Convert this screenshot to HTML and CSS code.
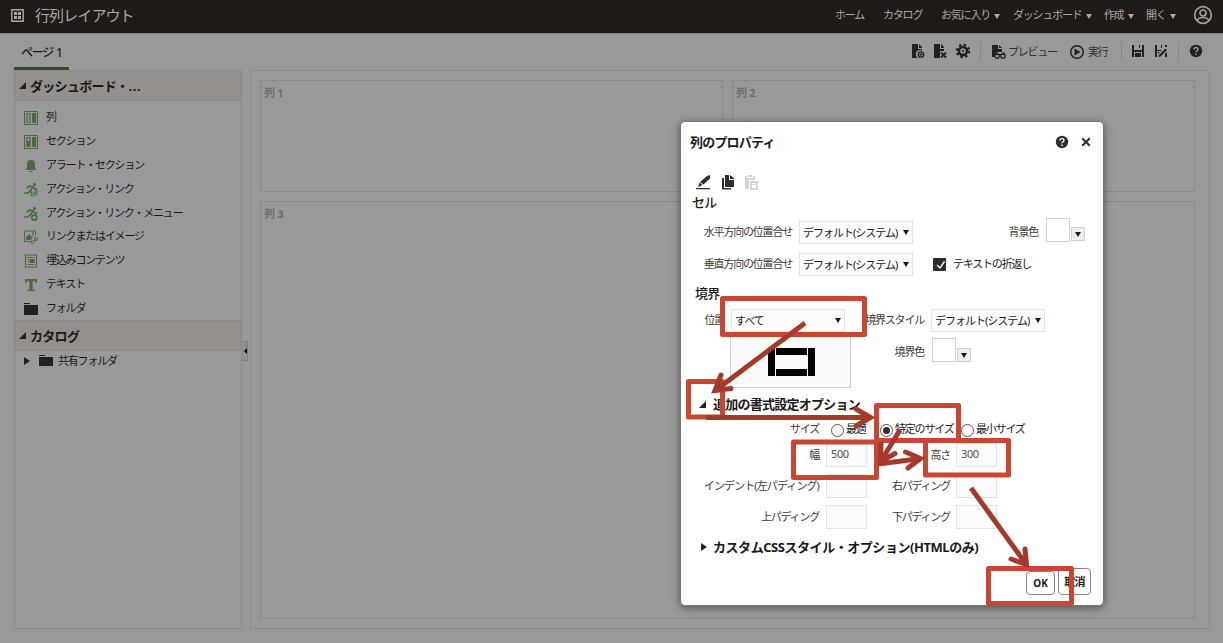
FILE: index.html
```
<!doctype html>
<html lang="ja">
<head>
    <meta charset="UTF-8"/>
    <title>行列レイアウト</title>
    <link rel="stylesheet" href="styles.css">
</head>
<body>
<div class="header">
    <svg class="logo" width="13" height="13" viewBox="0 0 13 13"><path d="M.8.8h11.4v11.4H.8z" fill="none" stroke="#aaa8a6" stroke-width="1.4"/><path d="M3 3h3v3H3zM7 3h3v3H7zM3 7h3v3H3zM7 7h3v3H7z" fill="#aaa8a6"/></svg>
    <h1>行列レイアウト</h1>
    <div class="nav">
        <span class="n1">ホーム</span>
        <span class="n2">カタログ</span>
        <span class="n3">お気に入り<i class="down"></i></span>
        <span class="n4">ダッシュボード<i class="down"></i></span>
        <span class="n5">作成<i class="down"></i></span>
        <span class="n6">開く<i class="down"></i></span>
        <svg width="20" height="20" viewBox="0 0 20 20" fill="none" stroke="#a19f9d" stroke-width="1.7"><circle cx="10" cy="10" r="8.3"/><circle cx="10" cy="8" r="3"/><path d="M4.500 15.500c1-4 10-4 11 0"/></svg>
    </div>
</div>
<div class="bar">
    <div class="tab">ページ 1</div>
    <div class="tools">
        <svg width="16" height="16" viewBox="0 0 16 16"><path d="M2 1h6v5h4v1.500a4 4 0 0 0-4 7.500H2zM9 1l3 3v1H9z"/><circle cx="11" cy="11.500" r="2.700" fill="none" stroke="#23201d" stroke-width="1.300"/><path d="M9.500 11h3v1h-3zM10.500 10h1v3h-1z"/></svg>
        <svg class="t2" width="16" height="16" viewBox="0 0 16 16"><path d="M2 1h6v5h4v2H8v7H2zM9 1l3 3v1H9z"/><path d="M9 9.500l5 5M14 9.500l-5 5" stroke="#23201d" stroke-width="1.800"/></svg>
        <svg class="t3" width="16" height="16" viewBox="0 0 16 16" fill="none" stroke="#23201d"><circle cx="8" cy="8" r="4" stroke-width="2.400"/><circle cx="8" cy="8" r="6" stroke-width="2.400" stroke-dasharray="2.400 2.310"/><circle cx="8" cy="8" r="1" fill="#23201d" stroke="none"/></svg>
        <i class="sep s1"></i>
        <svg class="t4" width="16" height="16" viewBox="0 0 16 16"><path d="M1 1h6v4h4v3H5v5H1zM8 1l3 3H8z"/><circle cx="6" cy="12" r="2.200" fill="#999" stroke="#23201d" stroke-width="1.300"/><circle cx="12" cy="12" r="2.200" fill="#999" stroke="#23201d" stroke-width="1.300"/><path d="M4 9l2-1 1 2h4l1-2 2 1v2H4z"/></svg>
        <span class="preview">プレビュー</span>
        <svg class="t5" width="16" height="16" viewBox="0 0 16 16"><circle cx="8" cy="8" r="6.300" fill="none" stroke="#23201d" stroke-width="1.500"/><path d="M5.500 4.500l6 3.500-6 3.500z"/></svg>
        <span class="run">実行</span>
        <i class="sep s2"></i>
        <svg class="t6" width="14" height="14" viewBox="0 0 14 14"><path d="M1 1h2v5h8V1h2v12h-2V8H3v5H1zM8 1h1v3H8zM4 9h6v4H4z"/></svg>
        <svg class="t7" width="14" height="14" viewBox="0 0 14 14"><path d="M1 1h2v5h5L7 7H3v6H1zM7 1h1v3H7zM11 1h2v2h-2zM5 11l6.500-6.500 1.500 1.500-6.500 6.500L4.500 13zM11 10l2-2v5h-2zM4 8h2L4 10z"/></svg>
        <i class="sep s3"></i>
        <svg class="t8" width="14" height="14" viewBox="0 0 14 14"><circle cx="7" cy="7" r="6.200"/><path d="M5 5.500c0-2.700 4-2.500 4-.2C9 6.800 7 6.700 7 8.300M7 9.500V11" fill="none" stroke="#999" stroke-width="1.500"/></svg>
    </div>
</div>
<div class="main">
    <div class="side">
        <h2><i class="open"></i>ダッシュボード・<span class="dots">...</span></h2>
        <ul>
            <li><svg viewBox="0 0 14 14"><path d="M.5.5h13v13H.5zM3 2.500h3v9H3z" fill="none" stroke="#4d6845" stroke-width="1.200"/><path d="M8 2h4v10H8z"/></svg>列</li>
            <li><svg viewBox="0 0 14 14"><path d="M.5.5h13v13H.5zM3 2.500h3v4H3z" fill="none" stroke="#4d6845" stroke-width="1.200"/><path d="M2.400 6h4.200v6H2.400zM8 2h4v10H8z"/></svg>セクション</li>
            <li><svg viewBox="0 0 14 14"><path d="M7 1c3.500 0 4 2 4 5v3l1.500 2h-11L3 9V6c0-3 .5-5 4-5zM5 12h4c-.5 1.500-3.500 1.500-4 0z"/></svg>アラート・セクション</li>
            <li><svg viewBox="0 0 14 14"><circle cx="10.500" cy="1.700" r="1.600"/><path d="M2.500 5l3.500-2 3 1-3 4 2 2M9 4l2 2h2.500M6 8L4 10H0" fill="none" stroke="#4d6845" stroke-width="1.700"/><circle cx="8.500" cy="12" r="1.500" fill="none" stroke="#4d6845"/><circle cx="12" cy="9" r="1.500" fill="none" stroke="#4d6845"/><path d="M9.500 11.200l2-1.500M11 13l2-2" stroke="#4d6845"/></svg>アクション・リンク</li>
            <li><svg viewBox="0 0 14 14"><circle cx="10.500" cy="1.700" r="1.600"/><path d="M2.500 5l3.500-2 3 1-3 4M9 4l2 2h2.500M6 8L4 10H0" fill="none" stroke="#4d6845" stroke-width="1.700"/><circle cx="10.300" cy="10.500" r="2.500" fill="none" stroke="#4d6845" stroke-width="1.800"/></svg>アクション・リンク・メニュー</li>
            <li><svg viewBox="0 0 14 14"><path d="M6.500 11.500H.5V1h11v5" fill="none" stroke="#4d6845"/><path d="M2 10V7l3-3 2 2.500 3-1.500-3 5zM8 2.500h2v2H8z"/><circle cx="8.500" cy="12" r="1.500" fill="none" stroke="#4d6845"/><circle cx="12" cy="9" r="1.500" fill="none" stroke="#4d6845"/><path d="M9.500 11.200l2-1.500" stroke="#4d6845"/></svg>リンクまたはイメージ</li>
            <li><svg viewBox="0 0 14 14"><path d="M1.500 1h11v12h-11z" fill="none" stroke="#4d6845" stroke-width="1.200"/><path d="M3.500 3h7v1h-7zM5.500 5h5v4h-5zM3.500 5h1v1h-1zM3.500 7h1v1h-1zM3.500 10h7v1h-7z"/></svg>埋込みコンテンツ</li>
            <li><svg viewBox="0 0 14 14"><path d="M1 1h12v4h-1.200L11 3H8.600v8.500l2.400.6v.9H3v-.9l2.400-.6V3H3l-.8 2H1z"/></svg>テキスト</li>
            <li><svg viewBox="0 0 14 14"><path d="M0 1h6v1H0zM0 3h14v10H0z" fill="#23201d"/></svg>フォルダ</li>
        </ul>
        <h2 class="cat"><i class="open"></i>カタログ</h2>
        <div class="shared"><i class="closed"></i><svg width="14" height="14" viewBox="0 0 14 14"><path d="M0 1h6v1H0zM0 3h14v9H0z"/></svg>共有フォルダ</div>
    </div>
    <div class="grip"><i></i></div>
    <div class="canvas">
        <div class="cell">列 1</div>
        <div class="cell">列 2</div>
        <div class="cell wide">列 3</div>
    </div>
</div>

<div class="dialog">
    <div class="title">
        <b>列のプロパティ</b>
        <svg width="14" height="14" viewBox="0 0 14 14"><circle cx="7" cy="7" r="6.200" fill="#312d2a"/><path d="M5 5.500c0-2.700 4-2.500 4-.2C9 6.800 7 6.700 7 8.300M7 9.500V11" fill="none" stroke="#fff" stroke-width="1.300"/></svg>
        <svg class="close" width="10" height="10" viewBox="0 0 10 10"><path d="M1.200 1.200l7.600 7.600M8.800 1.200L1.200 8.800" stroke="#312d2a" stroke-width="2"/></svg>
    </div>
    <div class="icons">
        <svg width="15" height="15" viewBox="0 0 15 15" fill="#312d2a"><path d="M0 13h14v1.300H0zM14 0v3.500L7.500 9.500 4 7l7-6zM3.500 7.500L6.500 10 2 12z"/></svg>
        <svg width="15" height="15" viewBox="0 0 15 15" fill="#312d2a"><path d="M4 0h4v5h5v7H4zM9 0l4 3v1H9zM1 3h2v10h7v1.500H1z"/></svg>
        <svg width="15" height="15" viewBox="0 0 15 15" fill="#d5d5d5"><path d="M0 1h2v2h6V1h2v4H4v9H0zM3 0h4v2H3zM5 6h8v9H5z"/><path d="M7 8h3v1H7zM7 10h4v3H7z" fill="#fff"/></svg>
    </div>
    <h3 class="h-cell">セル</h3>
    <div class="row r1">
        <label class="l1">水平方向の位置合せ</label>
        <div class="select">デフォルト(システム)<i class="down"></i></div>
        <label class="l2">背景色</label>
        <i class="swatch"></i><span class="drop"><i class="down"></i></span>
    </div>
    <div class="row r2">
        <label class="l1">垂直方向の位置合せ</label>
        <div class="select">デフォルト(システム)<i class="down"></i></div>
        <svg class="check" width="13" height="13" viewBox="0 0 13 13"><rect width="13" height="13" rx="1" fill="#312d2a"/><path d="M4 7l3 3 4.500-6.500" fill="none" stroke="#fff" stroke-width="1.400"/></svg>
        <span class="wrap">テキストの折返し</span>
    </div>
    <h3 class="h-border">境界</h3>
    <div class="row r3">
        <label class="l3">位置</label>
        <div class="select">すべて<i class="down"></i></div>
        <label class="l4">境界スタイル</label>
        <div class="select">デフォルト(システム)<i class="down"></i></div>
    </div>
    <div class="row r4">
        <div class="sample"><svg width="47" height="29" viewBox="0 0 47 29"><path d="M0 0h7v28H0zM40 0h7v28h-7zM8 0h31v7H8zM8 21h31v7H8z"/></svg></div>
        <label class="l5">境界色</label>
        <i class="swatch"></i><span class="drop"><i class="down"></i></span>
    </div>
    <h3 class="h-more"><i class="open"></i>追加の書式設定オプション</h3>
    <div class="row r5">
        <label class="l6">サイズ</label>
        <i class="radio"></i><span class="o1">最適</span>
        <i class="radio on"></i><span class="o2">特定のサイズ</span>
        <i class="radio"></i><span>最小サイズ</span>
    </div>
    <div class="row r6">
        <label class="l6">幅</label><div class="input">500</div>
        <label class="l7">高さ</label><div class="input">300</div>
    </div>
    <div class="row r7">
        <label class="l6 indent">インデント(左パディング)</label><div class="input"></div>
        <label class="l7">右パディング</label><div class="input"></div>
    </div>
    <div class="row r7">
        <label class="l6">上パディング</label><div class="input"></div>
        <label class="l7">下パディング</label><div class="input"></div>
    </div>
    <h3 class="h-css"><i class="closed"></i>カスタムCSSスタイル・オプション(HTMLのみ)</h3>
    <div class="foot"><div class="btn ok">OK</div><div class="btn cancel">取消</div></div>
</div>

<!-- 手順の枠と矢印 -->
<svg class="marks" width="1223" height="643" viewBox="0 0 1223 643" fill="none" stroke-width="5">
    <g stroke="#c84733" stroke-linejoin="round">
        <rect x="722.500" y="298.500" width="142" height="36"/>
        <rect x="688.500" y="381.500" width="34" height="35.500"/>
        <rect x="876.500" y="405.500" width="82" height="35"/>
        <rect x="793.500" y="442" width="83" height="35.500"/>
        <rect x="925.500" y="440.500" width="83" height="34.500"/>
        <rect x="988.500" y="568.500" width="83" height="35"/>
    </g>
    <g stroke="#a43a2a" stroke-linecap="round">
        <path d="M805 323L716 390" stroke-linecap="butt"/><path d="M721 375L715 390.500L731 388.500"/>
        <path d="M706 417.500H871" stroke-linecap="butt"/><path d="M856 409L870.500 417.500L856 426"/>
        <path d="M900 430L881 461" stroke-linecap="butt"/><path d="M881 444L880.500 461.500L895 453.500"/>
        <path d="M878 464L921 458.500" stroke-linecap="butt"/><path d="M905.500 452L920.500 458.500L908 468"/>
        <path d="M971 488L1026 564" stroke-linecap="butt"/><path d="M1025 549L1026.500 564.500L1011 559"/>
    </g>
</svg>
</body>
</html>
```
FILE: styles.css
```
* {
    margin: 0;
    padding: 0;
    box-sizing: border-box;
}
body {
    width: 1223px;
    height: 643px;
    overflow: hidden;
    position: relative;
    background: #999;
    color: #1b1917;
    font: 11px/18px "Noto Sans", "Noto Sans CJK JP", sans-serif;
    letter-spacing: -1.2px;
    white-space: nowrap;
}
i {
    display: block;
    flex: none;
}
svg {
    display: block;
    flex: none;
}
.down {
    border: 3.5px solid transparent;
    border-top: 5px solid currentColor;
    border-bottom: 0;
}
.open {
    border-left: 7px solid transparent;
    border-bottom: 7px solid #23201d;
}
.closed {
    border: 4.5px solid transparent;
    border-left: 6px solid #23201d;
    border-right: 0;
}

/* header */
.header {
    height: 33px;
    background: #1e1b19;
    display: flex;
    align-items: center;
    padding: 0 10px 3px 11px;
    color: #aaa8a6;
}
.header h1 {
    margin-left: 11px;
    font-size: 15px;
    font-weight: normal;
    letter-spacing: -.9px;
}
.nav {
    margin-left: auto;
    display: flex;
    align-items: center;
}
.nav span {
    display: flex;
    align-items: center;
}
.nav .down {
    margin: 2px 0 0 4px;
}
.n1 { width: 48px; }
.n2 { width: 58px; }
.n3 { width: 72px; }
.n4 { width: 91px; }
.n5 { width: 42px; }
.n6 { width: 47px; }

/* tab and tools */
.bar {
    height: 37px;
    border-top: 1px solid #858483;
    display: flex;
    padding: 0 20px 0 14px;
}
.tab {
    width: 55px;
    border-bottom: 3px solid #334a2c;
    padding: 10px 0 0 7px;
    font-size: 12px;
    font-weight: 500;
    letter-spacing: -1.2px;
    word-spacing: 1px;
}
.tools {
    margin-left: auto;
    height: 35px;
    display: flex;
    align-items: center;
    color: #33302d;
    fill: #23201d;
}
.tools svg {
    margin-top: -1px;
}
.sep {
    width: 1px;
    height: 19px;
    background: #858585;
}
.tools .t2 { margin-left: 6px; }
.tools .t3 { margin-left: 7px; }
.s1 { margin-left: 9px; }
.tools .t4 { margin: 1px 0 0 10px; }
.preview { width: 62px; padding-left: 1px; }
.tools .t5 { margin-top: 1px; }
.run { width: 20px; margin-left: 3px; }
.s2 { margin-left: 13px; }
.tools .t6 { margin-left: 9px; }
.tools .t7 { margin-left: 9px; }
.s3 { margin-left: 10px; }
.tools .t8 { margin-left: 10px; }

/* panes */
.main {
    display: flex;
    height: 559px;
    padding: 0 13px 0 14px;
}
.side {
    width: 228px;
    border: 1px solid #8b8b8b;
}
.side h2 {
    height: 30px;
    display: flex;
    align-items: center;
    padding-left: 4px;
    background: #93908e;
    border-bottom: 1px solid #8a8a8a;
    font-size: 13px;
    letter-spacing: -.7px;
}
.dots {
    letter-spacing: .7px;
}
.side h2 .open {
    margin-right: 4px;
}
.side .cat {
    border-top: 1px solid #8a8a8a;
    height: 31px;
}
.side ul {
    list-style: none;
    padding: 4px 0 0 9px;
    height: 219px;
}
.side li {
    height: 23.9px;
    display: flex;
    align-items: center;
}
.side li svg {
    width: 14px;
    height: 14px;
    margin: 2px 8px 0 0;
    fill: #4d6845;
}
.shared {
    display: flex;
    align-items: center;
    height: 20px;
    padding-left: 9px;
}
.shared svg {
    margin: 0 5px 0 9px;
    fill: #23201d;
}
.grip {
    width: 6px;
    height: 20px;
    margin: 271px 2px 0 0;
    border: 1px solid #7d8185;
    border-left: 0;
    background: #8f9294;
    padding: 6px 0 0 1px;
}
.grip i {
    border: 3px solid transparent;
    border-right: 3px solid #000;
    border-left: 0;
}
.canvas {
    flex: 1;
    border: 1px solid #8b8b8b;
    padding: 9px 14px 9px 9px;
    display: grid;
    grid-template: 112px 1fr / 463px 1fr;
    gap: 9px;
}
.cell {
    border: 1px dotted #7c7c7c;
    padding: 3px;
    font-weight: bold;
    letter-spacing: -.8px;
    word-spacing: 1px;
    color: #6d6d6d;
}
.wide {
    grid-column: span 2;
}

/* dialog */
.dialog {
    position: absolute;
    left: 680px;
    top: 121px;
    width: 424px;
    height: 485px;
    background: #fff;
    border: 1px solid #777;
    border-radius: 5px;
    box-shadow: 0 2px 8px rgba(0,0,0,.45);
}
.title {
    height: 39px;
    display: flex;
    align-items: center;
    padding: 0 12px 0 9px;
    font-size: 13px;
    letter-spacing: -.8px;
}
.title svg {
    margin: 1px 0 0 auto;
}
.title .close {
    margin-left: 12px;
}
.icons {
    height: 21px;
    margin-top: 11px;
    padding-left: 15px;
    display: flex;
    align-items: center;
    gap: 9.5px;
}
.dialog h3 {
    height: 18px;
    display: flex;
    align-items: center;
    font-size: 13px;
    letter-spacing: -.75px;
}
.h-cell {
    padding-left: 11px;
}
.dialog .h-cell, .dialog .h-border {
    font-weight: 500;
}
.h-border {
    margin-top: 5px;
    padding-left: 14px;
}
.h-more {
    margin-top: 7px;
    padding-left: 18px;
}
.h-css {
    margin-top: 9px;
    padding-left: 20px;
}
.dialog .h-css {
    letter-spacing: -.45px;
}
.h-more .open {
    margin-right: 7px;
}
.h-css .closed {
    margin-right: 6px;
}
.row {
    height: 30px;
    display: flex;
    align-items: center;
}
.row label {
    text-align: right;
    color: #3c3835;
}
.select {
    width: 114px;
    height: 23px;
    margin-left: 7px;
    border: 1px solid #dfe4e7;
    background: #fbfcfe;
    display: flex;
    align-items: center;
    justify-content: space-between;
    padding: 1px 3px 0 3px;
    letter-spacing: -1px;
}
.swatch {
    width: 24px;
    height: 24px;
    margin-left: 8px;
    border: 1px solid #d0d0d0;
}
.drop {
    width: 14px;
    height: 14px;
    margin-left: 1px;
    border: 1px solid #ccd0d3;
    background: #eceeef;
    display: flex;
    align-items: center;
    justify-content: center;
}
.r1 { margin-top: 6px; }
.r2 { margin-top: 2px; }
.r3 { margin-top: 3px; }
.r4 {
    height: 52px;
    margin-top: 1px;
    align-items: flex-start;
}
.r5 {
    height: 20px;
    margin-top: 6px;
}
.r6 {
    height: 24px;
    margin-top: 4px;
}
.r7 {
    height: 24px;
    margin-top: 7px;
}
.l1 { width: 111px; }
.l2 { width: 125px; }
.l3 { width: 43px; }
.l4 { width: 79px; }
.l5 { width: 73px; padding-top: 7px; }
.l6 { width: 138px; }
.l7 { width: 83px; }
.indent { letter-spacing: -.9px; }
.r1 .swatch { margin-top: -5px; }
.r1 .drop { margin-top: 4px; }
.r4 .swatch { margin: 2px 0 0 8px; }
.r4 .drop { margin-top: 12px; }
.check { margin-left: 20px; }
.wrap { margin-left: 7px; }
.sample {
    width: 121px;
    height: 52px;
    margin-left: 49px;
    border: 1px solid #d0d0d0;
    border-top: 0;
    background: #fafafa;
    padding: 12px 0 0 37px;
}
.radio {
    width: 13px;
    height: 13px;
    border: 1px solid #55514e;
    border-radius: 50%;
    padding: 2px;
    margin: 2px 2px 0 0;
}
.r5 .l6 {
    margin-right: 12px;
}
.radio.on {
    background: #312d2a;
    background-clip: content-box;
}
.o1 { width: 34px; }
.o2 { width: 66px; }
.input {
    width: 41px;
    height: 24px;
    margin-left: 7px;
    border: 1px solid #dfe4e7;
    background: #fbfcfe;
    padding-left: 4px;
    line-height: 20px;
    letter-spacing: -.4px;
    color: #55514e;
}
.r6 .l7 + .input,
.r7 .l7 + .input {
    margin-left: 6px;
}
.foot {
    height: 27px;
    margin-top: 12px;
    padding-right: 12px;
    display: flex;
    justify-content: flex-end;
    align-items: flex-end;
    gap: 3px;
}
.btn {
    border: 1px solid #8b8580;
    border-radius: 4px;
    display: flex;
    align-items: center;
    justify-content: center;
    font-weight: bold;
    letter-spacing: -.8px;
}
.ok {
    width: 29px;
    height: 24px;
    font-size: 10px;
    letter-spacing: 0;
}
.cancel {
    width: 33px;
    height: 27px;
}
.marks {
    position: absolute;
    left: 0;
    top: 0;
}
```
